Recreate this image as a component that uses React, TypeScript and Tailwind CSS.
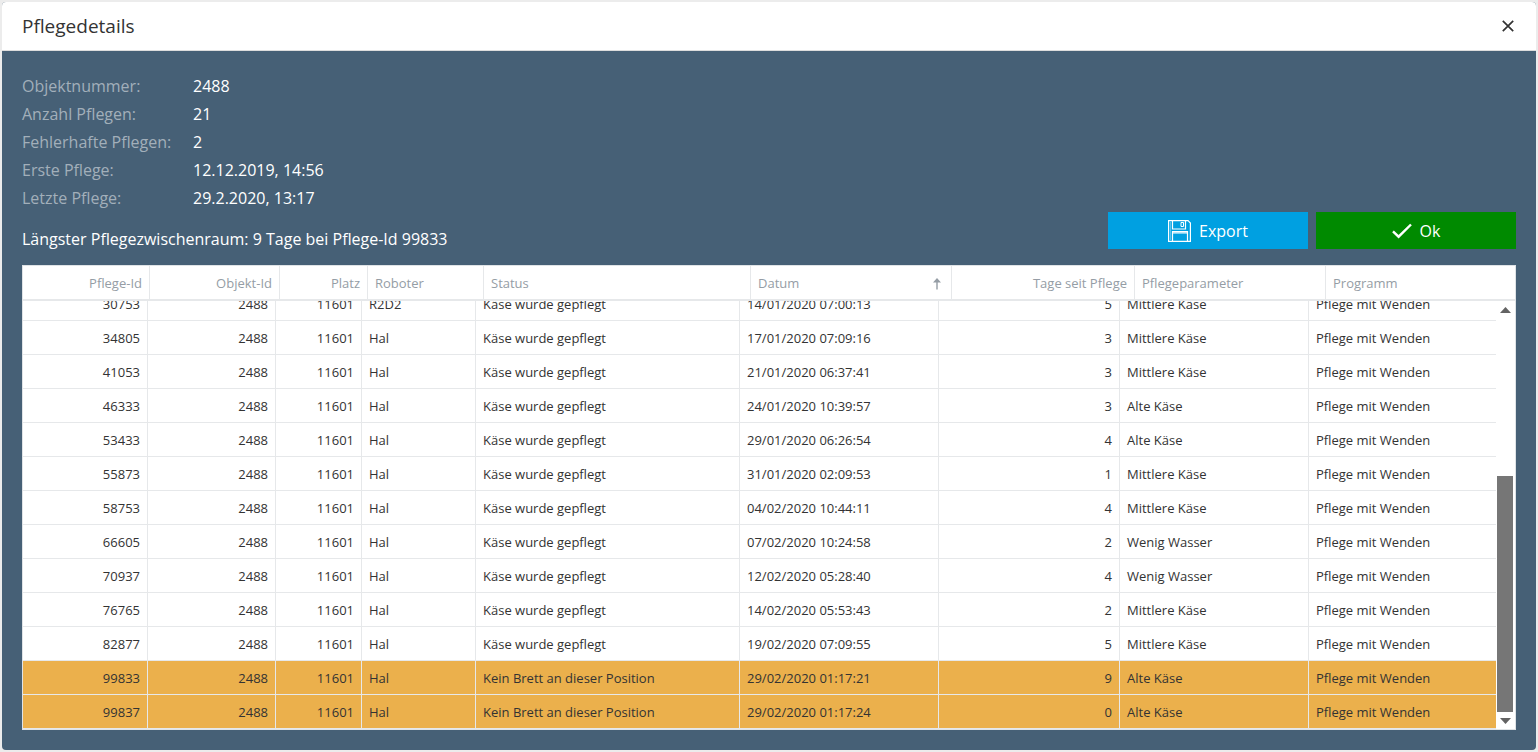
import clsx from 'clsx'

interface Care {
  id: number
  robot: string
  status: string
  date: string
  days: number
  param: string
  failed?: boolean
}

const OK = 'Käse wurde gepflegt'
const NO_BOARD = 'Kein Brett an dieser Position'

const cares: Care[] = [
  { id: 30753, robot: 'R2D2', status: OK, date: '14/01/2020 07:00:13', days: 5, param: 'Mittlere Käse' },
  { id: 34805, robot: 'Hal', status: OK, date: '17/01/2020 07:09:16', days: 3, param: 'Mittlere Käse' },
  { id: 41053, robot: 'Hal', status: OK, date: '21/01/2020 06:37:41', days: 3, param: 'Mittlere Käse' },
  { id: 46333, robot: 'Hal', status: OK, date: '24/01/2020 10:39:57', days: 3, param: 'Alte Käse' },
  { id: 53433, robot: 'Hal', status: OK, date: '29/01/2020 06:26:54', days: 4, param: 'Alte Käse' },
  { id: 55873, robot: 'Hal', status: OK, date: '31/01/2020 02:09:53', days: 1, param: 'Mittlere Käse' },
  { id: 58753, robot: 'Hal', status: OK, date: '04/02/2020 10:44:11', days: 4, param: 'Mittlere Käse' },
  { id: 66605, robot: 'Hal', status: OK, date: '07/02/2020 10:24:58', days: 2, param: 'Wenig Wasser' },
  { id: 70937, robot: 'Hal', status: OK, date: '12/02/2020 05:28:40', days: 4, param: 'Wenig Wasser' },
  { id: 76765, robot: 'Hal', status: OK, date: '14/02/2020 05:53:43', days: 2, param: 'Mittlere Käse' },
  { id: 82877, robot: 'Hal', status: OK, date: '19/02/2020 07:09:55', days: 5, param: 'Mittlere Käse' },
  { id: 99833, robot: 'Hal', status: NO_BOARD, date: '29/02/2020 01:17:21', days: 9, param: 'Alte Käse', failed: true },
  { id: 99837, robot: 'Hal', status: NO_BOARD, date: '29/02/2020 01:17:24', days: 0, param: 'Alte Käse', failed: true },
]

// width is for the rows, headWidth for the header that also spans the scrollbar
const columns = [
  { title: 'Pflege-Id', width: 'w-[125px]', headWidth: 'w-[127px]', right: true },
  { title: 'Objekt-Id', width: 'w-[128px]', headWidth: 'w-[130px]', right: true },
  { title: 'Platz', width: 'w-[86px]', headWidth: 'w-[88px]', right: true },
  { title: 'Roboter', width: 'w-[114px]', headWidth: 'w-[116px]' },
  { title: 'Status', width: 'w-[264px]', headWidth: 'w-[267px]' },
  { title: 'Datum', width: 'w-[199px]', headWidth: 'w-[201px]', sorted: true },
  { title: 'Tage seit Pflege', width: 'w-[181px]', headWidth: 'w-[183px]', right: true },
  { title: 'Pflegeparameter', width: 'w-[189px]', headWidth: 'w-[191px]' },
  { title: 'Programm', width: 'w-[187px]', headWidth: 'w-[189px]' },
]

const info = [
  ['Objektnummer:', '2488'],
  ['Anzahl Pflegen:', '21'],
  ['Fehlerhafte Pflegen:', '2'],
  ['Erste Pflege:', '12.12.2019, 14:56'],
  ['Letzte Pflege:', '29.2.2020, 13:17'],
]

function Columns({ head }: { head?: boolean }) {
  return (
    <colgroup>
      {columns.map((c) => (
        <col key={c.title} className={head ? c.headWidth : c.width} />
      ))}
    </colgroup>
  )
}

function CloseIcon() {
  return (
    <svg width="12" height="12" viewBox="0 0 12 12" fill="none" stroke="currentColor" strokeWidth="1.7">
      <path d="M.8.8l10.4 10.4M11.2.8L.8 11.2" />
    </svg>
  )
}

function SaveIcon() {
  return (
    <svg width="23" height="22" viewBox="0 0 23 22" fill="none" stroke="currentColor" strokeWidth="1.2">
      <path d="M.6.6H20L22.4 3v18.4H.6z" />
      <path d="M4.5 1v8h13V1" />
      <path d="M13 2.5h2.5v4H13z" strokeWidth="1" />
      <path d="M4.5 21.4v-9.9h15v9.9M4.5 12.9h15" />
      <path d="M2.6 2v18" strokeWidth=".4" />
    </svg>
  )
}

function CheckIcon() {
  return (
    <svg width="20" height="16" viewBox="0 0 20 16" fill="none" stroke="currentColor" strokeWidth="2.4">
      <path d="M1 8.3l5.6 5.4L19 1.5" />
    </svg>
  )
}

function SortIcon() {
  return (
    <svg width="8" height="12" viewBox="0 0 8 12" fill="currentColor">
      <path d="M4 0l4 4.4H4.7V11.5H3.3V4.4H0z" />
    </svg>
  )
}

function Arrow({ down }: { down?: boolean }) {
  return (
    <svg width="11" height="6" viewBox="0 0 11 6" fill="#636363">
      <path d={down ? 'M0 0h11L5.5 6z' : 'M0 6h11L5.5 0z'} />
    </svg>
  )
}

function Cell({ children, right }: { children: React.ReactNode; right?: boolean }) {
  return (
    <td
      className={clsx(
        'h-[34px] border-r border-b border-[#e6e8ea] px-[7px] pt-0.5 whitespace-nowrap last:border-r-0',
        right && 'text-right',
      )}
    >
      {children}
    </td>
  )
}

export default function App() {
  return (
    <div className="h-screen bg-[#ececec] p-0.5 font-['Open_Sans','Noto_Sans',sans-serif]">
      <div role="dialog" aria-label="Pflegedetails" className="flex h-full flex-col overflow-hidden rounded bg-[#466076]">
        <header className="flex h-[49px] shrink-0 items-center justify-between border-b border-[#dddddd] bg-white px-5 text-[#333333]">
          <h1 className="text-[19px]">Pflegedetails</h1>
          <button type="button" aria-label="Schließen" className="p-0.5">
            <CloseIcon />
          </button>
        </header>

        <div className="flex min-h-0 flex-1 flex-col px-5 pt-[21px] pb-5 text-base text-white">
          <dl className="grid grid-cols-[171px_1fr] leading-7">
            {info.map(([label, value]) => (
              <div key={label} className="contents">
                <dt className="text-[#a2afba]">{label}</dt>
                <dd>{value}</dd>
              </div>
            ))}
          </dl>

          <div className="flex items-end justify-between">
            <p className="pb-3 leading-7">Längster Pflegezwischenraum: 9 Tage bei Pflege-Id 99833</p>
            <div className="flex gap-2 pb-4">
              <button type="button" className="flex h-[37px] w-[200px] items-center justify-center gap-2 bg-[#00a0e1]">
                <SaveIcon />
                Export
              </button>
              <button type="button" className="flex h-[37px] w-[200px] items-center justify-center gap-2 bg-[#008a00]">
                <CheckIcon />
                Ok
              </button>
            </div>
          </div>

          <div className="flex min-h-0 flex-1 flex-col border border-[#dfe3e6] bg-white text-[13px] text-[#333333]">
            <table className="w-full table-fixed border-separate border-spacing-0">
              <Columns head />
              <thead>
                <tr>
                  {columns.map((c) => (
                    <th
                      key={c.title}
                      className="h-[35px] border-r border-b-2 border-[#e6e8ea] px-[7px] pt-0.5 font-normal text-[#959da5] last:border-r-0"
                    >
                      <div className={clsx('flex items-center', c.right ? 'justify-end' : 'justify-between')}>
                        {c.title}
                        {c.sorted && (
                          <span className="pr-[3px]">
                            <SortIcon />
                          </span>
                        )}
                      </div>
                    </th>
                  ))}
                </tr>
              </thead>
            </table>

            {/* Rows are scrolled to the end, the first one is cut by the header */}
            <div className="flex min-h-0 flex-1">
              <div className="flex min-w-0 flex-1 flex-col justify-end overflow-hidden">
                <table className="w-full shrink-0 table-fixed border-separate border-spacing-0">
                  <Columns />
                  <tbody>
                    {cares.map((c) => (
                      <tr key={c.id} className={clsx(c.failed && 'bg-[#ebb04c]')}>
                        <Cell right>{c.id}</Cell>
                        <Cell right>2488</Cell>
                        <Cell right>11601</Cell>
                        <Cell>{c.robot}</Cell>
                        <Cell>{c.status}</Cell>
                        <Cell>{c.date}</Cell>
                        <Cell right>{c.days}</Cell>
                        <Cell>{c.param}</Cell>
                        <Cell>Pflege mit Wenden</Cell>
                      </tr>
                    ))}
                  </tbody>
                </table>
              </div>
              <div className="flex w-[19px] flex-col pr-0.5 pl-px">
                <div className="flex h-[17px] items-center justify-center">
                  <Arrow />
                </div>
                <div className="flex flex-1 flex-col justify-end">
                  <div className="h-3/5 bg-[#767676]" />
                </div>
                <div className="flex h-[17px] items-center justify-center">
                  <Arrow down />
                </div>
              </div>
            </div>
          </div>
        </div>
      </div>
    </div>
  )
}
